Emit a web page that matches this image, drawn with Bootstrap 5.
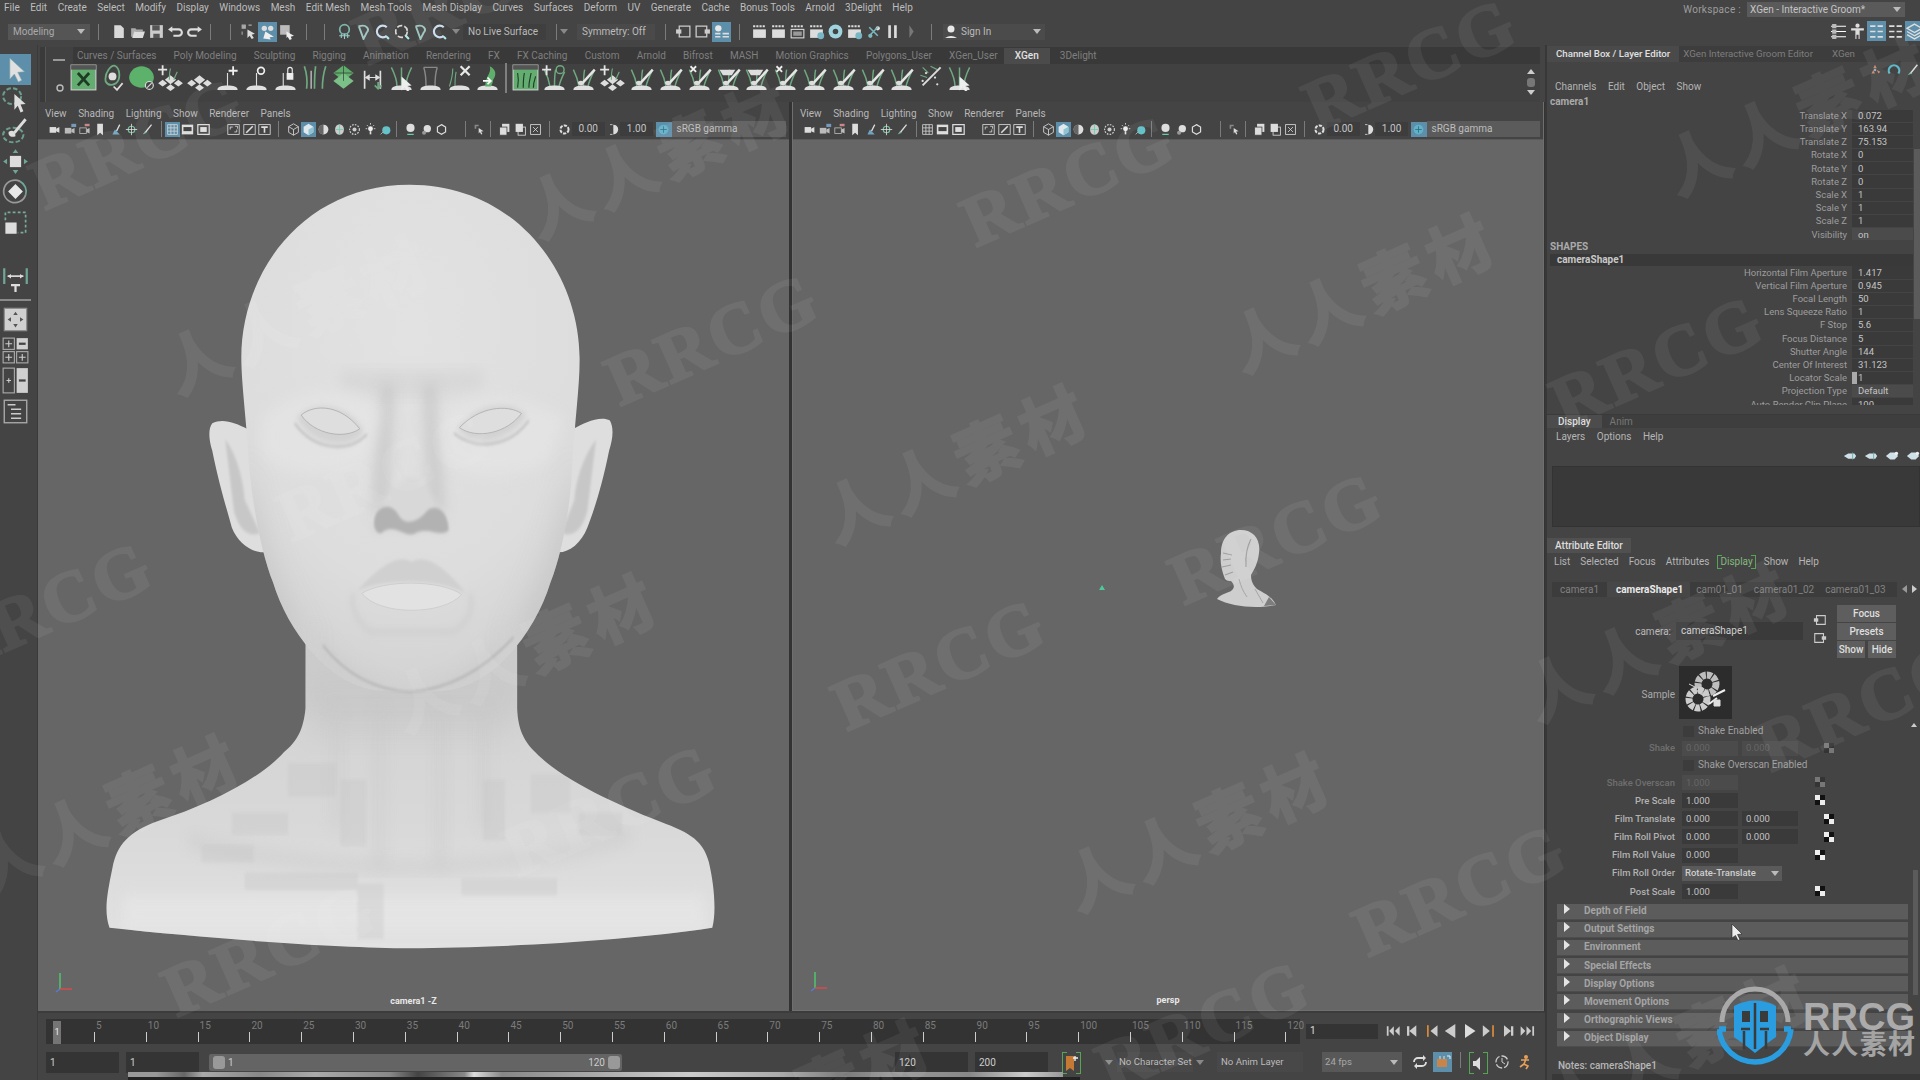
<!DOCTYPE html>
<html lang="en"><head><meta charset="utf-8"><title>Maya</title>
<link href="https://cdn.jsdelivr.net/npm/bootstrap@5.3.0/dist/css/bootstrap.min.css" rel="stylesheet">
<style>
html,body{margin:0;width:1920px;height:1080px;overflow:hidden;background:#444}
body{font-family:Roboto,"Liberation Sans",sans-serif;font-size:10px;line-height:1;color:#bdbdbd}
.app{position:relative;width:1920px;height:1080px;overflow:hidden;background:#444}
.wmk{position:absolute;left:0;top:0;width:1920px;height:1080px;pointer-events:none;z-index:5}
.wmk text{fill:#fff;stroke:#fff;stroke-width:2.2px;opacity:.06;text-anchor:middle;font-weight:700}
.wm-r{font-family:"Liberation Serif",serif;font-size:72px;letter-spacing:3px}
.wm-c{font-family:"Noto Sans CJK SC",sans-serif;font-size:64px;letter-spacing:8px}
.brandmark{position:absolute;left:1717px;top:985px;width:203px;height:80px;z-index:6}
.brandmark text{font-weight:700}
.top-left{width:1545px}.top-right{width:375px}
.menubar{height:15px;align-items:center}
.menubar .mg{margin-left:10.5px}
.mi-1{padding-left:4px}
.status{height:30px;align-items:center;padding:3px 0 0 8px}
.sel{height:16px;display:flex;align-items:center;background:#555;color:#aaa;padding:0 5px}
.sel-mode{width:82px;justify-content:space-between}
.tri{width:0;height:0;border-left:4px solid transparent;border-right:4px solid transparent;border-top:5px solid #bbb;flex:none}
.tri-dim{border-top-color:#888;margin:0 3px}
.ic{display:flex;align-items:center;justify-content:center;flex:none}
.ic19{width:19px;height:20px}.ic19 svg{width:17px;height:17px}
.ic15{width:15.4px;height:15px}.ic15 svg{width:13px;height:13px}
.on{background:#5d8eaa}
.sep{width:1px;height:16px;background:#7b7b7b;flex:none}
.sp3{width:3px;flex:none}.sp6{width:6px;flex:none}.sp8{width:8px;flex:none}.sp10{width:10px;flex:none}.sp17{width:17px;flex:none}.sp19{width:19px;flex:none}
.box-d{height:16px;display:flex;align-items:center;background:#3f3f3f;color:#bbb;padding:0 5px}
.bx-live{width:83px}.bx-sym{width:78px;margin-left:6px;background:#4a4a4a}
.bx-sign{width:102px;justify-content:space-between;background:#4b4b4b;padding:0 4px 0 18px;margin-left:11px}
.ws-row{height:15px;align-items:center;justify-content:flex-end;margin-top:2px}
.ws-lab{color:#9d9d9d;margin-right:6px;letter-spacing:.3px}
.ws-sel{width:158px;height:15px;background:#5a5a5a;color:#c4c4c4;display:flex;align-items:center;justify-content:space-between;padding:0 4px 0 3px;margin-right:15px}
.ws-ic{height:28px;justify-content:flex-end;align-items:center;margin-right:-4px}
.main{height:1035px}
.toolbox{width:38px;flex:none;padding-top:9px;border-right:1px solid #3a3a3a;align-items:flex-start}
.tool{width:31px;height:30.6px;display:flex;align-items:center;justify-content:center;flex:none}
.tool svg{width:27px;height:27px}
.tool-gap{height:27px;flex:none}
.tool-sep{width:31px;height:2px;background:#8a8a8a;margin:4px 0 3px;flex:none}
.center{width:1507px;flex:none}
.shelf{height:55px;flex:none;margin:2px 5px 0 2px;display:flex;background:#414141}
.shelf-grip{width:6px;background:#3a3a3a;border-right:1px solid #555}
.shelf-side{width:27px;display:flex;flex-direction:column;align-items:center;justify-content:space-between;padding:10px 0 9px}
.shelf-body{flex:1;min-width:0;position:relative}
.shelf-tabs{height:17px;background:#393939;display:flex;align-items:center;color:#7f7f7f;white-space:nowrap;padding:1px 0 0 4px}
.shelf-tabs span{flex:none;margin-right:17.2px}
.shelf-tabs .tab-act{background:#4b4b4b;color:#e2e2e2;height:16px;display:flex;align-items:center;padding:0 11px;font-weight:500;margin:0 10px 0 -11px}
.shelf-icons{height:27px;display:flex;align-items:center;margin-left:-4px}
.sic{width:28.9px;height:30px;display:flex;align-items:center;justify-content:center;flex:none}
.sic svg{width:27px;height:27px}
.shelf-div{width:2px;height:30px;background:#7f7f7f;margin:0 4px 0 3px;flex:none}
.shelf-scroll{position:absolute;right:5px;top:21px;height:28px;width:8px;display:flex;flex-direction:column;align-items:center;justify-content:space-between}
.views{height:909px;flex:none;display:flex;gap:3px;background:#333}
.vp{display:flex;flex-direction:column;background:#444;flex:none;position:relative}
.vp-l{width:751px}.vp-r{width:752px;border:1px solid #6f6f6f;border-width:0 1px 1px 1px}
.vp-menu{height:18px;display:flex;align-items:flex-end;gap:11.5px;padding:0 0 1px 7px;color:#b8b8b8;flex:none}
.vp-bar{height:19px;display:flex;align-items:center;padding:0 3px 1px 9px;flex:none;white-space:nowrap}
.num{width:33px;height:14px;background:#3d3d3d;color:#c5c5c5;display:flex;align-items:center;justify-content:center;flex:none}
.gamma{flex:1;min-width:0;height:16px;background:#5b5b5b;color:#bdbdbd;display:flex;align-items:center;padding-left:5px}
.canvas{flex:1;background:#666;position:relative;overflow:hidden;border-top:1px solid #5a5a5a}
.vp-cap{position:absolute;left:0;right:0;bottom:5px;text-align:center;color:#e8e8e8;font-size:9px;font-weight:700}
.head{position:absolute;left:42px;top:20px;width:680px;height:860px}
.head2{position:absolute;left:424px;top:389px;width:62px;height:78px}
.gizmo{position:absolute;width:26px;height:26px;bottom:16px;left:10px}
.tiny-tri{position:absolute;left:306px;top:445px;width:0;height:0;border-left:3px solid transparent;border-right:3px solid transparent;border-bottom:5px solid #4fc79a}
.tl{height:33px;flex:none;display:flex;align-items:center;padding:5px 0 0 8px;background:#444;border-top:2px solid #3c3c3c}
.tl-track{width:1254px;height:25px;background:#333;display:flex;position:relative;flex:none;align-items:flex-end}
.tl-cur{width:8px;height:23px;background:#757575;margin:0 33px 0 7px;flex:none;color:#eee;display:flex;align-items:center;justify-content:center;font-size:9px}
.tick{width:51.8px;flex:none;height:25px;position:relative;color:#7b7b7b;font-size:10px}
.tick i{position:absolute;left:0;bottom:2px;width:1px;height:10px;background:#ccc}
.tick b{position:absolute;left:2px;top:2px;font-weight:400}
.tl-input{width:72px;height:15px;background:#343434;color:#ddd;margin-left:6px;display:flex;align-items:center;padding-left:4px;flex:none}
.pb{display:flex;align-items:center;margin-left:5px}
.pb svg{width:19.3px;height:14px;flex:none}
.rg{height:38px;flex:none;position:relative;display:flex;padding:8px 0 0 8px;background:#444}
.rg-in{width:73px;height:21px;background:#343434;color:#ccc;display:flex;align-items:center;padding-left:4px;flex:none}
.rg-gap{margin-left:7px}
.rg-sl{width:413px;height:17px;background:#646464;margin:2px 0 0 10px;display:flex;align-items:center;justify-content:space-between;padding:0 2px 0 4px;flex:none;border-radius:2px;color:#ccc}
.rg-h{width:12px;height:13px;background:#999;border-radius:3px;display:inline-block;flex:none}
.rg-mid{flex:1;padding:0 3px;display:flex;justify-content:space-between}
.wave{position:absolute;left:90px;top:28px;width:935px;height:5px;background:linear-gradient(90deg,#999 0 3%,#666 6%,#aaa 8%,#888 14%,#aaa 20%,#888 28%,#444 31%,#888 36%,#ddd 37%,#888 40%,#aaa 50%,#ccc 60%,#aaa 70%,#777 76%,#999 82%,#888 90%,#ccc 96%,#999 100%);z-index:1}
.wave-bg{position:absolute;left:90px;top:33px;width:952px;height:5px;background:#222}
.rg-right{margin-left:273px;display:flex;align-items:flex-start}
.brk{border:solid #57a454;border-width:0 1.5px;background:linear-gradient(#57a454,#57a454) 0 0/4px 1px no-repeat,linear-gradient(#57a454,#57a454) 100% 0/4px 1px no-repeat,linear-gradient(#57a454,#57a454) 0 100%/4px 1px no-repeat,linear-gradient(#57a454,#57a454) 100% 100%/4px 1px no-repeat}
.key{width:19px;height:22px;margin:0 0 0 14px;display:flex;align-items:center;justify-content:center;flex:none}
.key svg{width:13px;height:17px}
.rg-t{height:20px;display:flex;align-items:center;color:#bbb;flex:none;font-size:9.6px}
.t-chr{width:76px;background:#484848;padding-left:2px;margin-left:1px}
.t-lay{width:86px;background:#484848;padding-left:4px;margin-left:10px}
.t-fps{width:80px;background:#585858;padding:0 4px 0 3px;justify-content:space-between;color:#a8a8a8;margin-left:19px}
.rg-ic{width:19px;height:20px;display:flex;align-items:center;justify-content:center;flex:none}
.rg-ic svg{width:16px;height:16px}
.right{width:375px;flex:none;background:#444;border-left:2px solid #383838;position:relative}
.rtabs{height:16px;display:flex;align-items:center;color:#7d7d7d;background:#3d3d3d;margin-top:1px;flex:none;font-size:9.7px}
.rtab-a{background:#4a4a4a;color:#e0e0e0;font-weight:500;height:16px;display:flex;align-items:center;padding:0 9px;flex:none;margin-right:4px}
.rt-g{margin-left:19px}
.r-ic{height:16px;display:flex;justify-content:flex-end;align-items:center;gap:5px;flex:none}
.r-ic svg{width:14px;height:14px}
.rmenu{display:flex;align-items:center;flex:none;color:#b5b5b5;gap:11.500px;padding-left:8px}
.rmenu-cb{height:17px}
.cb{height:310px;flex:none;overflow:hidden;padding-left:3px;position:relative}
.cb-h{height:14px;display:flex;align-items:center;font-weight:700;color:#aaa;font-size:10px}
.cb-h2{height:13px}
.cb-s{height:12px;display:flex;align-items:center;background:#393939;font-weight:700;color:#c9c9c9;padding-left:7px;width:363px}
.cb-r{height:13.2px;display:flex;align-items:center;font-size:9.5px;color:#9d9d9d}
.cb-l{width:297px;text-align:right;flex:none}
.cb-v{width:61px;height:12.2px;margin-left:5px;background:#3a3a3a;color:#c4c4c4;padding-left:6px;display:flex;align-items:center;flex:none;position:relative}
.cb-v.ro{background:#4b4b4b}
.lcs{position:absolute;left:0;top:0;width:5px;height:100%;background:#aaa}
.cb-sb{position:absolute;right:0;top:54px;width:6px;height:170px;background:#5b5b5b}
.disp{height:10px;flex:none;background:#444;border-bottom:1px solid #3a3a3a}
.tabs2{height:13px;display:flex;align-items:center;background:#3e3e3e;color:#777;flex:none}
.t2a{background:#4c4c4c;color:#ddd;font-weight:500;height:13px;padding:0 11px;display:flex;align-items:center;flex:none}
.rmenu-l{height:18px;padding-left:9px}
.l-ic{height:20px;display:flex;justify-content:flex-end;gap:7px;align-items:center;flex:none}
.l-ic svg{width:14px;height:12px}
.lbox{height:61px;background:#393939;margin-left:5px;flex:none;border:1px solid #333}
.ae-tab{margin-top:11px;height:15px;flex:none;display:flex}
.ae-tab span{background:#505050;color:#ddd;padding:0 8px;display:flex;align-items:center;font-weight:500}
.rmenu-a{height:17px;gap:10px;padding-left:7px}
.dsp{padding:2px 2px;margin:0 -2px;color:#83b97c}
.aet{margin-top:12px;height:15px;display:flex;align-items:center;color:#818181;background:#3c3c3c;margin-left:5px;width:345px;position:relative;flex:none}
.aet-a{background:#474747;color:#e9e9e9;font-weight:700;height:15px;display:flex;align-items:center;padding:0 7px 0 9px;flex:none;margin-right:6px}
.aet span{flex:none}
.aet-g{margin-right:11px}
.aet-0{padding:0 8px}
.aet-arr{position:absolute;left:350px;top:3px;display:flex;gap:5px}
.tl-l{border-top:4px solid transparent;border-bottom:4px solid transparent;border-right:5px solid #999;display:block;width:0;height:0}
.tl-rr{border-top:4px solid transparent;border-bottom:4px solid transparent;border-left:5px solid #ccc;display:block;width:0;height:0}
.cam-b{display:flex;margin-top:8px;height:54px;flex:none}
.cam-lab{width:129px;text-align:right;padding-right:5px;flex:none;color:#b8b8b8;padding-top:22px}
.cam-in{width:127px;height:18px;background:#3a3a3a;color:#cfcfcf;padding-left:5px;display:flex;align-items:center;margin-top:17px;flex:none}
.cam-ics{width:34px;display:flex;flex-direction:column;align-items:center;padding-top:8px;gap:4px;flex:none}
.cam-ics svg{width:16px;height:14px}
.cam-btn{width:59px;flex:none;display:flex;flex-direction:column;gap:1px}
.mbtn{height:17px;background:#5e5e5e;color:#dedede;display:flex;align-items:center;justify-content:center;font-weight:500;flex:none}
.mbtn-row{display:flex;gap:3px}
.mbtn-row .mbtn{flex:1 1 0;min-width:0}
.sam{display:flex;margin-top:7px;height:54px;flex:none}
.sam-l{width:132px;text-align:right;padding:24px 4px 0 0;color:#aaa;flex:none}
.sam-sw{width:53px;height:53px;background:#2c2c2c;flex:none;display:flex;align-items:center;justify-content:center}
.frm{flex:1;min-height:0;position:relative;padding:3px 0 0 10px}
.fr-c{height:16px;display:flex;align-items:center;padding-left:126px;color:#9f9f9f}
.chk{width:11px;height:11px;background:#3c3c3c;margin-right:4px;flex:none}
.fr{height:18.2px;display:flex;align-items:center;color:#b2b2b2;flex:none;font-weight:500;font-size:9.5px}
.fr-d{color:#6f6f6f}
.fr-l{width:118px;text-align:right;flex:none}
.fr-i{width:56px;height:15px;background:#3a3a3a;color:#c2c2c2;margin-left:7px;display:flex;align-items:center;padding-left:4px;font-weight:400;flex:none}
.fr-i+.fr-i{margin-left:4px}
.fr-i.dis{background:#4b4b4b;color:#666}
.ck1{margin-left:77px;width:10px;height:10px;flex:none}
.ck2{margin-left:26px;width:10px;height:10px;flex:none}
.fr-sel{width:100px;height:15px;background:#5a5a5a;color:#cfcfcf;display:flex;align-items:center;justify-content:space-between;padding:0 3px;font-size:9.5px;margin-left:7px}
.sect{height:16px;width:351px;background:#5c5c5c;display:flex;align-items:center;margin:0 0 2.2px 0;font-weight:700;color:#a4a4a4;flex:none;border-bottom:1px solid #4d4d4d}
.sect i{border-top:5px solid transparent;border-bottom:5px solid transparent;border-left:6px solid #e4e4e4;margin:0 14px 4px 7px;display:block;width:0;height:0}
.sects{margin-top:3px}
.ae-sb{position:absolute;right:2px;top:150px;width:5px;height:125px;background:#5b5b5b}
.ae-arr{position:absolute;right:3px;top:3px;border-left:3px solid transparent;border-right:3px solid transparent;border-bottom:4px solid #ccc}
.mouse{position:absolute;left:1731px;top:923px;width:12px;height:18px;z-index:6}
.notes{height:16px;flex:none;padding-left:11px;display:flex;align-items:center;color:#b5b5b5;font-weight:500}
.notes-b{height:6px;background:#383838;margin-left:5px;flex:none}
</style></head>
<body>
<svg width="0" height="0" class="position-absolute">
<defs>
<symbol id="doc" viewBox="0 0 16 16"><path d="M4 2h6l3 3v9H4z" fill="#d8d8d8"/></symbol>
<symbol id="fold" viewBox="0 0 16 16"><path d="M2 5h4l1 1h6v2H6l-2 5H2z" fill="#aaa"/><path d="M5 8h10l-2 6H3z" fill="#ddd"/></symbol>
<symbol id="save" viewBox="0 0 16 16"><path d="M2 2h12v12H2z" fill="#ccc"/><path d="M4 2h7v5H4zM5 10h6v4H5z" fill="#555"/></symbol>
<symbol id="undo" viewBox="0 0 16 16"><path d="M3 8h8a3 3 0 0 1 0 6H6" fill="none" stroke="#ddd" stroke-width="2" transform="translate(0 -2)"/><path d="M1 6l4-3v6z" fill="#ddd"/></symbol>
<symbol id="redo" viewBox="0 0 16 16"><path d="M13 8H5a3 3 0 0 0 0 6h5" fill="none" stroke="#ddd" stroke-width="2" transform="translate(0 -2)"/><path d="M15 6l-4-3v6z" fill="#ddd"/></symbol>
<symbol id="s1" viewBox="0 0 16 16"><path d="M2 2h3v3H2zM8 2h3M2 8v3" fill="#aaa" stroke="#aaa"/><path d="M7 6l7 4-3 1 2 3-2 1-2-3-2 2z" fill="#ddd"/></symbol>
<symbol id="s2" viewBox="0 0 16 16"><circle cx="5" cy="5" r="2.5" fill="#ddd"/><circle cx="11" cy="5" r="2.5" fill="#ddd"/><path d="M6 8l8 5-4 .5 1 2-7-1z" fill="#eee"/></symbol>
<symbol id="s3" viewBox="0 0 16 16"><path d="M2 2h9v9H2z" fill="#bbb"/><path d="M8 8l7 4-3 1 1 2-2 1-2-3-1 1z" fill="#eee"/></symbol>
<symbol id="sn1" viewBox="0 0 16 16"><circle cx="8" cy="6" r="4.5" fill="none" stroke="#7fb7ad" stroke-width="1.6"/><path d="M3 12h10M8 10v5M5 10v4M11 10v4" stroke="#9cc" stroke-width="1"/></symbol>
<symbol id="sn2" viewBox="0 0 16 16"><path d="M4 3c7-2 10 3 7 6l-3 6-4-11z" fill="none" stroke="#9cc4bf" stroke-width="1.8"/></symbol>
<symbol id="sn3" viewBox="0 0 16 16"><path d="M12 4A5.5 5.5 0 1 0 12 12" fill="none" stroke="#cde" stroke-width="2"/><path d="M12 13l2 2" stroke="#aee" stroke-width="2"/></symbol>
<symbol id="sn4" viewBox="0 0 16 16"><circle cx="8" cy="8" r="5.5" fill="none" stroke="#d8d8d8" stroke-width="1.6" stroke-dasharray="5 2"/><path d="M12 12l3 3" stroke="#aee" stroke-width="2"/></symbol>
<symbol id="rbox" viewBox="0 0 16 16"><path d="M4 3h10v10H4z" fill="none" stroke="#ccc" stroke-width="1.2"/><path d="M1 6h5v4H1z" fill="#ccc"/></symbol>
<symbol id="rbox2" viewBox="0 0 16 16"><path d="M2 3h10v10H2z" fill="none" stroke="#ccc" stroke-width="1.2"/><path d="M10 6h5v4h-5z" fill="#ccc"/></symbol>
<symbol id="lst" viewBox="0 0 16 16"><circle cx="5" cy="5" r="3" fill="#e8e8e8"/><path d="M9 10h6M9 13h6M2 10h5M2 13h5" stroke="#ddd" stroke-width="1.5"/></symbol>
<symbol id="clap" viewBox="0 0 16 16"><path d="M2 2h2v2H2zm3 0h2v2H5zm3 0h2v2H8zm3 0h2v2h-2z" fill="#ddd"/><rect x="2" y="6" width="12" height="8" fill="#ddd"/></symbol>
<symbol id="clap2" viewBox="0 0 16 16"><path d="M2 2h2v2H2zm3 0h2v2H5zm3 0h2v2H8zm3 0h2v2h-2z" fill="#ddd"/><rect x="2" y="6" width="12" height="8" fill="none" stroke="#ddd"/><rect x="4" y="8" width="8" height="4" fill="#999"/></symbol>
<symbol id="clap3" viewBox="0 0 16 16"><use href="#clap"/><circle cx="12" cy="12" r="3.2" fill="#78b6c4"/></symbol>
<symbol id="ring" viewBox="0 0 16 16"><circle cx="8" cy="8" r="6.5" fill="#9fd4de"/><circle cx="8" cy="8" r="2.6" fill="#444"/></symbol>
<symbol id="bolt" viewBox="0 0 16 16"><circle cx="5" cy="12" r="2" fill="#7cbac0"/><circle cx="12" cy="5" r="2" fill="#ddd"/><path d="M5 11l7-7M4 4l8 8" stroke="#7cbac0" stroke-width="1.4"/></symbol>
<symbol id="paus" viewBox="0 0 16 16"><path d="M4 2h2.5v12H4zM9.500 2H12v12H9.500z" fill="#ddd"/></symbol>
<symbol id="rtri" viewBox="0 0 16 16"><path d="M6 2l4 6-4 6" fill="#777"/></symbol>
<symbol id="pers" viewBox="0 0 16 16"><circle cx="8" cy="5" r="3.5" fill="#e8e8e8"/><path d="M2 14q6-4 12 0z" fill="#e8e8e8"/></symbol>
<symbol id="cur" viewBox="0 0 24 24"><path d="M7 2l13 12-6 .5 3.500 7-3 1.500-3.500-7-4 4.500z" fill="#e0e0e0" stroke="#8aa" stroke-width=".5"/></symbol>
<symbol id="lasso" viewBox="0 0 24 24"><ellipse cx="9" cy="9" rx="8" ry="7" fill="none" stroke="#6c9e90" stroke-width="1.8" stroke-dasharray="4 2"/><path d="M11 7l10 9-4.500.5 2.500 6-2.500 1-2.500-6-3 3.500z" fill="#ddd"/></symbol>
<symbol id="paint" viewBox="0 0 24 24"><ellipse cx="10" cy="16" rx="9" ry="6.500" fill="none" stroke="#6c9e90" stroke-width="1.800" stroke-dasharray="4 2"/><path d="M21 2L11 14" stroke="#ddd" stroke-width="2.500"/><path d="M6 13c4-2 6 0 6 4-4 2-7-1-6-4z" fill="#ddd"/></symbol>
<symbol id="mov" viewBox="0 0 24 24"><rect x="7" y="7" width="10" height="10" fill="#ddd"/><path d="M12 1l2.500 3.500h-5zM12 23l-2.500-3.500h5zM1 12l3.500-2.500v5zM23 12l-3.500 2.500v-5z" fill="#6fa698"/></symbol>
<symbol id="rot" viewBox="0 0 24 24"><path d="M12 6.500l5.500 5.500-5.500 5.500L6.500 12z" fill="#e8e8e8" stroke="#e8e8e8" stroke-width="1.500"/><path d="M21 15a10 10 0 1 1-5-12" fill="none" stroke="#999" stroke-width="1.500"/><path d="M16 3a10 10 0 0 1 5 12" fill="none" stroke="#6fa698" stroke-width="1.500"/></symbol>
<symbol id="sca" viewBox="0 0 24 24"><rect x="3" y="12" width="10" height="10" fill="#ddd"/><path d="M3 10V3h18v18h-7" fill="none" stroke="#7aaa9c" stroke-width="1.500" stroke-dasharray="2.500 2"/></symbol>
<symbol id="last" viewBox="0 0 24 24"><path d="M2 2v14M22 2v14" stroke="#6fa698" stroke-width="2"/><path d="M5 9h14" stroke="#ddd" stroke-width="1.500"/><path d="M5 9l3-2v4zM19 9l-3-2v4z" fill="#ddd"/><path d="M8 16h8v2h-3v5h-2v-5H8z" fill="#ddd"/></symbol>
<symbol id="lay1" viewBox="0 0 24 24"><rect x="2" y="2" width="20" height="20" fill="#d0d0d0" stroke="#888"/><path d="M12 5l2 3h-4zM12 19l-2-3h4zM5 12l3-2v4zM19 12l-3 2v-4z" fill="#555"/></symbol>
<symbol id="lay4" viewBox="0 0 24 24"><rect x="1" y="1" width="10" height="10" fill="none" stroke="#aaa"/><rect x="13" y="1" width="10" height="10" fill="#d0d0d0"/><rect x="1" y="13" width="10" height="10" fill="none" stroke="#aaa"/><rect x="13" y="13" width="10" height="10" fill="none" stroke="#aaa"/><path d="M6 3v6M3 6h6M6 15v6M3 18h6M18 15v6M15 18h6" stroke="#ccc"/><path d="M15 6h6" stroke="#444" stroke-width="2"/></symbol>
<symbol id="lay2" viewBox="0 0 24 24"><rect x="1" y="1" width="10" height="22" fill="none" stroke="#aaa"/><rect x="13" y="1" width="10" height="22" fill="#d0d0d0"/><path d="M6 10v4M4 12h4" stroke="#ccc"/><path d="M15 12h6" stroke="#444" stroke-width="2"/></symbol>
<symbol id="lay0" viewBox="0 0 24 24"><rect x="2" y="2" width="20" height="20" fill="none" stroke="#aaa" stroke-width="1.200"/><path d="M5 6h7M8 10h9M8 14h9M8 18h9" stroke="#ccc" stroke-width="1.500"/></symbol>
<symbol id="bladeG" viewBox="0 0 24 24"><path d="M8 20C7 14 5 9 3 5M12 20c0-6 0-10 1-15M16 20c1-5 3-9 5-13" fill="none" stroke="#6fa980" stroke-width="1.300"/></symbol>
<symbol id="base" viewBox="0 0 24 24"><path d="M3 23c0-3 4-4 9-4s9 1 9 4z" fill="#e0e0e0"/></symbol>
<symbol id="brush" viewBox="0 0 24 24"><path d="M22 5L11 17" stroke="#e6e6e6" stroke-width="2.200"/><path d="M7 16c3-2 5-1 5 2-2 2-5 1-5-2z" fill="#ddd"/></symbol>
<symbol id="dia" viewBox="0 0 24 24"><path d="M12 10l5 4-5 4-5-4zM5 14l4 3-4 3-4-3zM19 14l4 3-4 3-4-3zM12 18l4 3-4 3-4-3z" fill="#ddd"/></symbol>
<symbol id="plus" viewBox="0 0 24 24"><path d="M5 1v9M1 5h8" stroke="#e4e4e4" stroke-width="1.600"/></symbol>
<symbol id="g1" viewBox="0 0 24 24"><use href="#bladeG"/><use href="#base"/><use href="#brush"/></symbol>
<symbol id="g2" viewBox="0 0 24 24"><use href="#plus"/><use href="#dia"/><path d="M11 14c0-4 0-7 1-10M15 14c1-3 2-5 3-7" stroke="#6fa980" fill="none"/></symbol>
<symbol id="g3" viewBox="0 0 24 24"><use href="#base"/><path d="M12 20V8" stroke="#ddd"/><path d="M17 2v8M13 6h8" stroke="#eee" stroke-width="1.600"/></symbol>
<symbol id="g4" viewBox="0 0 24 24"><use href="#base"/><path d="M12 20V8" stroke="#ddd"/><circle cx="16" cy="6" r="3" fill="none" stroke="#eee" stroke-width="1.500"/></symbol>
<symbol id="g5" viewBox="0 0 24 24"><use href="#base"/><path d="M10 20V8" stroke="#ddd"/><path d="M13 8h6v6h-6z" fill="#eee"/><path d="M14 8V5a2 2 0 0 1 4 0v3" fill="none" stroke="#eee"/></symbol>
<symbol id="g6" viewBox="0 0 24 24"><path d="M5 22C6 14 5 8 3 2M12 22c0-8 0-14 1-20M19 22c0-8 1-14 3-20" fill="none" stroke="#6fa980" stroke-width="1.500"/><path d="M9 22V6" stroke="#ddd"/></symbol>
<symbol id="g7" viewBox="0 0 24 24"><path d="M12 1l9 7-9 7-9-7z" fill="#5fae6c"/><path d="M12 8l9 7-9 7-9-7z" fill="#7bc087"/><path d="M4 8h16M12 1v14" stroke="#333" stroke-width=".6"/></symbol>
<symbol id="g8" viewBox="0 0 24 24"><path d="M5 22V6M19 22V6" stroke="#ddd" stroke-width="1.500"/><path d="M6 12h12M6 12l3-2v4zM18 12l-3-2v4z" fill="#ddd" stroke="#ddd"/><path d="M17 16v6M14 19l3 3 3-3" stroke="#6fa980" stroke-width="1.500" fill="none"/></symbol>
<symbol id="g9" viewBox="0 0 24 24"><path d="M3 3c3 6 5 12 5 17M21 3c-3 6-5 12-5 17M12 3v17" stroke="#6fa980" fill="none" stroke-width="1.300"/><use href="#base"/><path d="M12 11l9 8-4 .5 2 4-2 1-2-4-3 3z" fill="#eee"/></symbol>
<symbol id="g10" viewBox="0 0 24 24"><path d="M6 3c2 6 2 11 2 17M18 3c-2 6-2 11-2 17M6 3h12" stroke="#888" fill="none" stroke-width="1.300"/><use href="#base"/></symbol>
<symbol id="g11" viewBox="0 0 24 24"><path d="M3 20c2-6 3-10 3-16M8 20c0-6 0-9 1-13" stroke="#6fa980" fill="none"/><path d="M13 2l8 8M21 2l-8 8" stroke="#e8e8e8" stroke-width="2"/><use href="#base"/></symbol>
<symbol id="g12" viewBox="0 0 24 24"><use href="#base"/><path d="M14 2c6 3 6 8 3 12 0 2-1 4-2 6h-5c0-4 1-7 2-9 2-3 3-6 2-9z" fill="#5fae6c"/><path d="M8 15h7M12 12l3 3-3 3" stroke="#fff" fill="none" stroke-width="1.500"/></symbol>
<symbol id="gx" viewBox="0 0 24 24"><rect x="1" y="1" width="22" height="22" fill="#62ad6f" stroke="#ccc"/><rect x="1" y="1" width="22" height="4" fill="#555"/><path d="M7 8l10 11M17 8L7 19" stroke="#1f3b24" stroke-width="2.500"/></symbol>
<symbol id="gd" viewBox="0 0 24 24"><path d="M5 12C8 4 17 2 19 4c3 4-1 13-7 14C8 18 5 16 5 12z" fill="none" stroke="#6fa980" stroke-width="1.600" transform="rotate(-30 12 12)"/><circle cx="12" cy="11" r="3.500" fill="#ddd"/><path d="M13 20l3 3 5-6" stroke="#ddd" stroke-width="1.500" fill="none"/></symbol>
<symbol id="gb" viewBox="0 0 24 24"><path d="M12 2c6 0 11 5 11 10s-5 9-11 9S1 17 1 12 6 2 12 2z" fill="#5cb16b"/><circle cx="19" cy="19" r="3.500" fill="#444" stroke="#ddd"/><path d="M17 21l4-4" stroke="#ddd"/></symbol>
<symbol id="gm" viewBox="0 0 24 24"><rect x="1" y="1" width="22" height="22" fill="#62ad6f" stroke="#ccc"/><rect x="1" y="1" width="22" height="4" fill="#555"/><path d="M5 21c1-5 1-8 0-13M10 21c0-5 0-8 1-13M15 21c0-5 1-8 2-13M19 21c0-4 1-7 2-10" stroke="#1f3b24" fill="none"/></symbol>
<symbol id="gj" viewBox="0 0 24 24"><use href="#bladeG"/><use href="#plus"/><use href="#base"/><circle cx="17" cy="5" r="3.500" fill="none" stroke="#6fa980" stroke-width="1.300"/></symbol>
<symbol id="gh" viewBox="0 0 24 24"><use href="#g1"/><path d="M4 5h14l-3 5H7z" fill="#ddd"/></symbol>
<symbol id="gy" viewBox="0 0 24 24"><use href="#g1"/><path d="M4 2l5 5M9 2L4 7" stroke="#eee" stroke-width="1.600"/></symbol>
<symbol id="gs" viewBox="0 0 24 24"><path d="M5 3l5 5M12 2l6 3M3 10l6 2" stroke="#6fa980"/><path d="M21 3L5 19" stroke="#ddd" stroke-width="1.800"/><circle cx="16" cy="12" r="1" fill="#ddd"/><circle cx="8" cy="8" r="1" fill="#ddd"/><circle cx="18" cy="18" r="1" fill="#ddd"/><circle cx="5" cy="15" r="1" fill="#ddd"/></symbol>
<symbol id="cam" viewBox="0 0 16 16"><rect x="2" y="5" width="8" height="7" fill="#ddd"/><path d="M10 7l4-2v7l-4-2z" fill="#ddd"/></symbol>
<symbol id="cam2" viewBox="0 0 16 16"><rect x="1" y="6" width="8" height="7" fill="#bbb"/><path d="M9 8l4-2v7l-4-2z" fill="#bbb"/><path d="M9 1h6v4H9z" fill="#79b"/></symbol>
<symbol id="cam3" viewBox="0 0 16 16"><rect x="1" y="6" width="8" height="7" fill="none" stroke="#bbb"/><path d="M9 8l4-2v7l-4-2z" fill="#bbb"/><path d="M7 1h6v3H7z" fill="#c88"/></symbol>
<symbol id="bkm" viewBox="0 0 16 16"><path d="M4 1h7v14l-3.500-3-3.500 3z" fill="#ddd"/></symbol>
<symbol id="imgp" viewBox="0 0 16 16"><path d="M12 2l-4 8" stroke="#ddd" stroke-width="1.500"/><path d="M3 14l3-6 6 6z" fill="#6fa5c0"/></symbol>
<symbol id="gmag" viewBox="0 0 16 16"><circle cx="8" cy="8" r="4" fill="none" stroke="#7ac0a0" stroke-width="1.500"/><path d="M8 1v14M1 8h14" stroke="#ddd"/></symbol>
<symbol id="pen" viewBox="0 0 16 16"><path d="M13 2L5 12" stroke="#ddd" stroke-width="1.600"/><path d="M2 14l3-4 2 2z" fill="#7ac0a0"/></symbol>
<symbol id="grid" viewBox="0 0 16 16"><path d="M2 2h12v12H2zM2 6h12M2 10h12M6 2v12M10 2v12" fill="none" stroke="#d5d5d5"/></symbol>
<symbol id="film" viewBox="0 0 16 16"><rect x="1" y="2" width="14" height="12" fill="#ddd"/><rect x="3" y="5" width="10" height="5" fill="#444"/></symbol>
<symbol id="fil2" viewBox="0 0 16 16"><rect x="1" y="2" width="14" height="12" fill="none" stroke="#ddd" stroke-width="1.500"/><rect x="4" y="5" width="8" height="6" fill="#ddd"/></symbol>
<symbol id="fil3" viewBox="0 0 16 16"><rect x="1" y="2" width="14" height="12" fill="none" stroke="#ddd"/><path d="M4 5h3M4 5v3M12 11H9M12 11V8" stroke="#ddd"/><path d="M10 4l3 0v3" stroke="#ddd" fill="none"/></symbol>
<symbol id="fil4" viewBox="0 0 16 16"><rect x="1" y="2" width="14" height="12" fill="none" stroke="#ddd"/><path d="M4 12L12 4" stroke="#ddd" stroke-width="2"/></symbol>
<symbol id="fil5" viewBox="0 0 16 16"><rect x="1" y="2" width="14" height="12" fill="none" stroke="#ddd"/><path d="M4 5h8M8 5v7" stroke="#ddd" stroke-width="2"/></symbol>
<symbol id="cwi" viewBox="0 0 16 16"><path d="M8 1l6 3.500v7L8 15l-6-3.500v-7zM2 4.500L8 8l6-3.500M8 8v7" fill="none" stroke="#ddd"/></symbol>
<symbol id="csh" viewBox="0 0 16 16"><path d="M8 1l6 3.500v7L8 15l-6-3.500v-7z" fill="#dfe9ed"/><path d="M8 8l6-3.500v7L8 15z" fill="#8fc3d2"/></symbol>
<symbol id="half" viewBox="0 0 16 16"><circle cx="8" cy="8" r="6" fill="#ddd"/><path d="M8 2a6 6 0 0 0 0 12z" fill="#666"/></symbol>
<symbol id="cylt" viewBox="0 0 16 16"><ellipse cx="8" cy="8" rx="5.500" ry="6.500" fill="#ccc"/><path d="M3 8h10M8 2v12" stroke="#6ca" stroke-width="1"/></symbol>
<symbol id="dots" viewBox="0 0 16 16"><circle cx="8" cy="8" r="6" fill="none" stroke="#ccc" stroke-width="1.500" stroke-dasharray="2 1.500"/><circle cx="8" cy="8" r="2.500" fill="#ccc"/></symbol>
<symbol id="bulb" viewBox="0 0 16 16"><circle cx="8" cy="7" r="3" fill="#eee"/><path d="M7 10h2v4H7z" fill="#ddd"/><path d="M8 0v2M2 7h2M12 7h2M3.500 2.500l1.500 1.500M12.500 2.500L11 4" stroke="#ddd"/></symbol>
<symbol id="gel" viewBox="0 0 16 16"><circle cx="9" cy="9" r="5" fill="#64c2c8"/><path d="M2 14l4-4" stroke="#aaa" stroke-width="1.200"/></symbol>
<symbol id="sph" viewBox="0 0 16 16"><circle cx="8" cy="6" r="5" fill="#ddd"/><path d="M4 14h8" stroke="#6ca" stroke-width="1.500"/></symbol>
<symbol id="sp2" viewBox="0 0 16 16"><circle cx="9" cy="7" r="4.500" fill="#ddd"/><circle cx="5" cy="12" r="2.500" fill="#999"/></symbol>
<symbol id="hex" viewBox="0 0 16 16"><path d="M8 2l5 3v6l-5 3-5-3V5z" fill="none" stroke="#ddd" stroke-width="1.500"/></symbol>
<symbol id="cursm" viewBox="0 0 16 16"><path d="M2 2h5v2H4v3H2z" fill="#888"/><path d="M7 6l6 4-3 .5 1.500 3-1.500.5-1.500-3L7 13z" fill="#ddd"/></symbol>
<symbol id="dup1" viewBox="0 0 16 16"><rect x="5" y="1" width="9" height="10" fill="#ddd"/><rect x="2" y="5" width="9" height="10" fill="#ddd" stroke="#444"/></symbol>
<symbol id="dup2" viewBox="0 0 16 16"><rect x="2" y="1" width="9" height="10" fill="#ddd"/><rect x="5" y="5" width="9" height="10" fill="none" stroke="#ddd"/></symbol>
<symbol id="xr" viewBox="0 0 16 16"><rect x="2" y="2" width="12" height="12" fill="none" stroke="#ddd"/><path d="M5 5l6 6M5 11l6-6" stroke="#ddd"/></symbol>
<symbol id="ap" viewBox="0 0 16 16"><circle cx="8" cy="8" r="5" fill="none" stroke="#ddd" stroke-width="2.500" stroke-dasharray="4 1.500"/></symbol>
<symbol id="half2" viewBox="0 0 16 16"><path d="M9 2a6 6 0 0 1 0 12z" fill="#ddd"/><path d="M8 2H5M8 14H5" stroke="#ddd"/></symbol>
<symbol id="cm" viewBox="0 0 16 16"><circle cx="8" cy="8" r="6" fill="#61b1c8"/><path d="M4 8h8M8 4v8" stroke="#2f6b7c"/></symbol>
<symbol id="ckr" viewBox="0 0 10 10"><rect width="10" height="10" fill="#eee"/><path d="M5 0h5v5H5zM0 5h5v5H0z" fill="#111"/></symbol>
<symbol id="att" viewBox="0 0 16 16"><path d="M8 2l2 4-4 0zM4 12l2-4 2 4zM12 12l-2-4 4 2z" fill="#c86"/><circle cx="8" cy="8" r="1.500" fill="#8ac"/></symbol>
<symbol id="chn" viewBox="0 0 16 16"><path d="M2 3h5M2 8h5M2 13h5M9 3h5M9 8h5M9 13h5" stroke="#ddd" stroke-width="1.600"/></symbol>
<symbol id="arc" viewBox="0 0 16 16"><path d="M3 12a6 6 0 1 1 10 0" fill="none" stroke="#5fb8c9" stroke-width="2.500"/></symbol>
<symbol id="man" viewBox="0 0 16 16"><circle cx="8" cy="2.500" r="2" fill="#ddd"/><path d="M2 5h12v2h-4v8H9v-4H7v4H6V7H2z" fill="#ddd"/></symbol>
<symbol id="bx3" viewBox="0 0 16 16"><path d="M1 3h14M1 8h14M1 13h14" stroke="#fff" stroke-width="1"/><path d="M2 1h4v4H2zM2 6h4v4H2zM2 11h4v4H2z" fill="#bbb"/></symbol>
<symbol id="lyr" viewBox="0 0 16 16"><path d="M8 1l7 4-7 4-7-4zM1 8l7 4 7-4M1 11l7 4 7-4" fill="none" stroke="#ddd" stroke-width="1.300"/></symbol>
<symbol id="lay-i" viewBox="0 0 16 12"><path d="M1 6l5-3v6zM6 3h7l2 3-2 3H6z" fill="#cfe0e6"/><path d="M11 2v8" stroke="#6aa"/></symbol>
<symbol id="lay-j" viewBox="0 0 16 12"><path d="M1 6l5-4h5l4 4-4 4H6z" fill="#cfe0e6"/><circle cx="13" cy="3" r="2" fill="#eee"/></symbol>
</defs>
</svg>
<div class="app">
<div class="d-flex">
<div class="top-left d-flex flex-column">
<div class="menubar d-flex mi-1 text-nowrap"><span>File</span><span class="mg">Edit</span><span class="mg">Create</span><span class="mg">Select</span><span class="mg">Modify</span><span class="mg">Display</span><span class="mg">Windows</span><span class="mg">Mesh</span><span class="mg">Edit Mesh</span><span class="mg">Mesh Tools</span><span class="mg">Mesh Display</span><span class="mg">Curves</span><span class="mg">Surfaces</span><span class="mg">Deform</span><span class="mg">UV</span><span class="mg">Generate</span><span class="mg">Cache</span><span class="mg">Bonus Tools</span><span class="mg">Arnold</span><span class="mg">3Delight</span><span class="mg">Help</span></div>
<div class="status d-flex text-nowrap">
<div class="sel sel-mode"><span>Modeling</span><i class="tri"></i></div><div class="sp8"></div><div class="sep"></div><div class="sp10"></div>
<div class="ic ic19"><svg><use href="#doc"/></svg></div><div class="ic ic19"><svg><use href="#fold"/></svg></div><div class="ic ic19"><svg><use href="#save"/></svg></div><div class="ic ic19"><svg><use href="#undo"/></svg></div><div class="ic ic19"><svg><use href="#redo"/></svg></div><div class="sp6"></div><div class="sep"></div><div class="sp19"></div><div class="sep"></div><div class="sp8"></div>
<div class="ic ic19"><svg><use href="#s1"/></svg></div><div class="ic ic19 on"><svg><use href="#s2"/></svg></div><div class="ic ic19"><svg><use href="#s3"/></svg></div><div class="sp10"></div><div class="sep"></div><div class="sp17"></div><div class="sep"></div><div class="sp10"></div>
<div class="ic ic19"><svg><use href="#sn1"/></svg></div><div class="ic ic19"><svg><use href="#sn2"/></svg></div><div class="ic ic19"><svg><use href="#sn3"/></svg></div><div class="ic ic19"><svg><use href="#sn4"/></svg></div><div class="ic ic19"><svg><use href="#sn2"/></svg></div><div class="ic ic19"><svg><use href="#sn3"/></svg></div><i class="tri tri-dim"></i>
<div class="box-d bx-live"><span>No Live Surface</span></div><div class="sp10"></div><div class="sep"></div><i class="tri tri-dim"></i><div class="box-d bx-sym"><span>Symmetry: Off</span></div><div class="sp10"></div><div class="sep"></div><div class="sp8"></div>
<div class="ic ic19"><svg><use href="#rbox"/></svg></div><div class="ic ic19"><svg><use href="#rbox2"/></svg></div><div class="ic ic19 on"><svg><use href="#lst"/></svg></div><div class="sp8"></div><div class="sep"></div><div class="sp10"></div>
<div class="ic ic19"><svg><use href="#clap"/></svg></div><div class="ic ic19"><svg><use href="#clap"/></svg></div><div class="ic ic19"><svg><use href="#clap2"/></svg></div><div class="ic ic19"><svg><use href="#clap3"/></svg></div><div class="ic ic19"><svg><use href="#ring"/></svg></div><div class="ic ic19"><svg><use href="#clap3"/></svg></div><div class="ic ic19"><svg><use href="#bolt"/></svg></div><div class="ic ic19"><svg><use href="#paus"/></svg></div><div class="ic ic19"><svg><use href="#rtri"/></svg></div><div class="sp10"></div><div class="sep"></div>
<div class="box-d bx-sign position-relative"><svg class="position-absolute top-0 start-0" width="16" height="16"><use href="#pers"/></svg><span>Sign In</span><i class="tri"></i></div>
</div>
</div>
<div class="top-right d-flex flex-column text-nowrap">
<div class="ws-row d-flex"><span class="ws-lab">Workspace :</span><div class="ws-sel"><span>XGen - Interactive Groom*</span><i class="tri"></i></div></div>
<div class="ws-ic d-flex"><div class="ic ic19"><svg><use href="#bx3"/></svg></div><div class="ic ic19"><svg><use href="#man"/></svg></div><div class="ic ic19 on"><svg><use href="#chn"/></svg></div><div class="ic ic19"><svg><use href="#chn"/></svg></div><div class="ic ic19 on"><svg><use href="#lyr"/></svg></div></div>
</div>
</div>
<div class="main d-flex">
<div class="toolbox d-flex flex-column">
<div class="tool on"><svg><use href="#cur"/></svg></div><div class="tool"><svg><use href="#lasso"/></svg></div><div class="tool"><svg><use href="#paint"/></svg></div><div class="tool"><svg><use href="#mov"/></svg></div><div class="tool"><svg><use href="#rot"/></svg></div><div class="tool"><svg><use href="#sca"/></svg></div><div class="tool-gap"></div><div class="tool"><svg><use href="#last"/></svg></div><div class="tool-sep"></div><div class="tool"><svg><use href="#lay1"/></svg></div><div class="tool"><svg><use href="#lay4"/></svg></div><div class="tool"><svg><use href="#lay2"/></svg></div><div class="tool"><svg><use href="#lay0"/></svg></div>
</div>
<div class="center d-flex flex-column">
<div class="shelf">
<div class="shelf-grip"></div>
<div class="shelf-side"><svg width="14" height="6"><rect y="2" width="12" height="2" fill="#999"/></svg><svg width="10" height="10"><circle cx="5" cy="5" r="3" fill="none" stroke="#bbb" stroke-width="1.400"/></svg></div>
<div class="shelf-body">
<div class="shelf-tabs"><span>Curves / Surfaces</span><span>Poly Modeling</span><span>Sculpting</span><span>Rigging</span><span>Animation</span><span>Rendering</span><span>FX</span><span>FX Caching</span><span>Custom</span><span>Arnold</span><span>Bifrost</span><span>MASH</span><span>Motion Graphics</span><span>Polygons_User</span><span>XGen_User</span><span class="tab-act">XGen</span><span>3Delight</span></div>
<div class="shelf-icons">
<div class="sic"><svg><use href="#gx"/></svg></div><div class="sic"><svg><use href="#gd"/></svg></div><div class="sic"><svg><use href="#gb"/></svg></div><div class="sic"><svg><use href="#g2"/></svg></div><div class="sic"><svg><use href="#dia"/></svg></div><div class="sic"><svg><use href="#g3"/></svg></div><div class="sic"><svg><use href="#g4"/></svg></div><div class="sic"><svg><use href="#g5"/></svg></div><div class="sic"><svg><use href="#g6"/></svg></div><div class="sic"><svg><use href="#g7"/></svg></div><div class="sic"><svg><use href="#g8"/></svg></div><div class="sic"><svg><use href="#g9"/></svg></div><div class="sic"><svg><use href="#g10"/></svg></div><div class="sic"><svg><use href="#g11"/></svg></div><div class="sic"><svg><use href="#g12"/></svg></div><div class="shelf-div"></div>
<div class="sic"><svg><use href="#gm"/></svg></div><div class="sic"><svg><use href="#gj"/></svg></div><div class="sic"><svg><use href="#g1"/></svg></div><div class="sic"><svg><use href="#g2"/></svg></div><div class="sic"><svg><use href="#g1"/></svg></div><div class="sic"><svg><use href="#g1"/></svg></div><div class="sic"><svg><use href="#gy"/></svg></div><div class="sic"><svg><use href="#gh"/></svg></div><div class="sic"><svg><use href="#gh"/></svg></div><div class="sic"><svg><use href="#gy"/></svg></div><div class="sic"><svg><use href="#g1"/></svg></div><div class="sic"><svg><use href="#g1"/></svg></div><div class="sic"><svg><use href="#g1"/></svg></div><div class="sic"><svg><use href="#g1"/></svg></div><div class="sic"><svg><use href="#gs"/></svg></div><div class="sic"><svg><use href="#g9"/></svg></div>
</div>
<div class="shelf-scroll"><svg width="8" height="6"><path d="M0 6l4-5 4 5z" fill="#ccc"/></svg><svg width="8" height="9"><rect width="8" height="9" rx="3" fill="#777"/></svg><svg width="8" height="6"><path d="M0 0l4 5 4-5z" fill="#ccc"/></svg></div>
</div>
</div>
<div class="views">
<div class="vp vp-l">
<div class="vp-menu"><span>View</span><span>Shading</span><span>Lighting</span><span>Show</span><span>Renderer</span><span>Panels</span></div>
<div class="vp-bar">
<div class="ic ic15"><svg><use href="#cam"/></svg></div><div class="ic ic15"><svg><use href="#cam2"/></svg></div><div class="ic ic15"><svg><use href="#cam3"/></svg></div><div class="ic ic15"><svg><use href="#bkm"/></svg></div><div class="ic ic15"><svg><use href="#imgp"/></svg></div><div class="ic ic15"><svg><use href="#gmag"/></svg></div><div class="ic ic15"><svg><use href="#pen"/></svg></div><div class="sp6"></div><div class="sep"></div><div class="sp3"></div>
<div class="ic ic15 on"><svg><use href="#grid"/></svg></div><div class="ic ic15"><svg><use href="#film"/></svg></div><div class="ic ic15"><svg><use href="#fil2"/></svg></div><div class="ic ic15"></div><div class="ic ic15"><svg><use href="#fil3"/></svg></div><div class="ic ic15"><svg><use href="#fil4"/></svg></div><div class="ic ic15"><svg><use href="#fil5"/></svg></div><div class="sp6"></div><div class="sep"></div><div class="sp6"></div>
<div class="ic ic15"><svg><use href="#cwi"/></svg></div><div class="ic ic15 on"><svg><use href="#csh"/></svg></div><div class="ic ic15"><svg><use href="#half"/></svg></div><div class="ic ic15"><svg><use href="#cylt"/></svg></div><div class="ic ic15"><svg><use href="#dots"/></svg></div><div class="ic ic15"><svg><use href="#bulb"/></svg></div><div class="ic ic15"><svg><use href="#gel"/></svg></div><div class="sp3"></div><div class="sep"></div><div class="sp6"></div>
<div class="ic ic15"><svg><use href="#sph"/></svg></div><div class="ic ic15"><svg><use href="#sp2"/></svg></div><div class="ic ic15"><svg><use href="#hex"/></svg></div><div class="ic ic15"></div><div class="sep"></div><div class="sp6"></div><div class="ic ic15"><svg><use href="#cursm"/></svg></div><div class="sp3"></div><div class="sep"></div><div class="sp6"></div>
<div class="ic ic15"><svg><use href="#dup1"/></svg></div><div class="ic ic15"><svg><use href="#dup2"/></svg></div><div class="ic ic15"><svg><use href="#xr"/></svg></div><div class="sp6"></div><div class="sep"></div><div class="sp6"></div>
<div class="ic ic15"><svg><use href="#ap"/></svg></div><div class="num">0.00</div><div class="ic ic15"><svg><use href="#half2"/></svg></div><div class="num">1.00</div><div class="sp3"></div><div class="ic ic15 on"><svg><use href="#cm"/></svg></div><div class="gamma">sRGB gamma</div>
</div>
<div class="canvas">
<svg class="head" viewBox="0 0 1568 1568" preserveAspectRatio="none">
<defs>
<filter id="b6" x="-30%" y="-30%" width="160%" height="160%"><feGaussianBlur stdDeviation="6"/></filter>
<filter id="b14" x="-30%" y="-30%" width="160%" height="160%"><feGaussianBlur stdDeviation="14"/></filter>
<filter id="b30" x="-40%" y="-40%" width="180%" height="180%"><feGaussianBlur stdDeviation="30"/></filter>
<filter id="b3" x="-30%" y="-30%" width="160%" height="160%"><feGaussianBlur stdDeviation="2.500"/></filter>
<linearGradient id="bust" x1="0" y1="0" x2="0" y2="1"><stop offset="0" stop-color="#cacaca"/><stop offset=".3" stop-color="#d4d4d4"/><stop offset=".6" stop-color="#d8d8d8"/><stop offset="1" stop-color="#e2e2e2"/></linearGradient>
<radialGradient id="skull" cx=".5" cy=".28" r=".72"><stop offset="0" stop-color="#e2e2e2"/><stop offset=".7" stop-color="#dddddd"/><stop offset="1" stop-color="#d2d2d2"/></radialGradient>
<clipPath id="hclip"><path d="M760 45C1000 45 1150 200 1152 360C1153 410 1140 480 1135 560C1130 640 1110 720 1085 770C1050 860 960 950 860 965C810 972 720 972 670 965C570 950 480 860 445 770C420 720 400 640 390 560C385 480 372 410 372 360C372 200 520 45 760 45Z"/></clipPath>
<clipPath id="bclip"><path d="M520 850V1000C515 1040 500 1060 470 1080C420 1125 300 1175 180 1205C110 1225 85 1250 75 1290C62 1340 55 1370 68 1400C300 1420 600 1437 760 1437C950 1437 1250 1425 1458 1400C1468 1370 1462 1320 1450 1280C1440 1250 1420 1230 1350 1210C1250 1180 1110 1130 1050 1080C1025 1060 1010 1040 1008 1000V850Z"/></clipPath>
</defs>
<path d="M520 850V1000C515 1040 500 1060 470 1080C420 1125 300 1175 180 1205C110 1225 85 1250 75 1290C62 1340 55 1370 68 1400C300 1420 600 1437 760 1437C950 1437 1250 1425 1458 1400C1468 1370 1462 1320 1450 1280C1440 1250 1420 1230 1350 1210C1250 1180 1110 1130 1050 1080C1025 1060 1010 1040 1008 1000V850Z" fill="url(#bust)"/>
<g clip-path="url(#bclip)">
<path d="M500 930h530v70l-60 40H560l-60-40z" fill="#bababa" opacity=".35" filter="url(#b30)"/>
<path d="M590 1000v220M690 990v300M830 990v300M930 1000v220" stroke="#c6c6c6" stroke-width="26" opacity=".3" filter="url(#b14)"/>
<path d="M250 1240c180 40 400 50 500 50s350-10 520-60" stroke="#bcbcbc" stroke-width="22" fill="none" opacity=".3" filter="url(#b14)"/>
<path d="M100 1340h1340v70H100z" fill="#e8e8e8" opacity=".6" filter="url(#b14)"/>
<path d="M480 1100h110v60H480zM600 1130h60v120h-60zM930 1130h50v110h-50zM1040 1120h90v70h-90zM350 1190h130v40H350zM1150 1190h100v40h-100zM280 1250h120v30H280zM380 1300h260v30H380zM880 1310h220v30H880zM640 1320h60v100h-60z" fill="#c6c6c6" opacity=".35" filter="url(#b3)"/>
</g>
<path d="M385 490C360 480 330 470 305 480C295 490 297 510 305 530C320 590 340 640 350 670C365 700 400 718 428 715L395 540Z" fill="#dedede"/>
<path d="M335 510c20 20 40 60 45 110l35 60c-30 10-50-10-60-40z" fill="#bcbcbc" opacity=".65" filter="url(#b3)"/>
<path d="M1138 490C1160 480 1200 465 1222 475C1232 490 1228 510 1220 530C1205 590 1185 640 1170 670C1155 700 1125 718 1098 715L1130 540Z" fill="#dedede"/>
<path d="M1190 510c-20 20-45 60-50 110l-30 60c30 10 50-10 60-40z" fill="#bcbcbc" opacity=".65" filter="url(#b3)"/>
<path d="M760 45C1000 45 1150 200 1152 360C1153 410 1140 480 1135 560C1130 640 1110 720 1085 770C1050 860 960 950 860 965C810 972 720 972 670 965C570 950 480 860 445 770C420 720 400 640 390 560C385 480 372 410 372 360C372 200 520 45 760 45Z" fill="url(#skull)"/>
<g clip-path="url(#hclip)">
<path d="M600 385h330v30l-110 15H700l-100-15z" fill="#c6c6c6" opacity=".35" filter="url(#b14)"/>
<path d="M695 410l30 0-10 210-45 30zM820 410l-30 0 10 210 45 30z" fill="#bcbcbc" opacity=".5" filter="url(#b14)"/>
<path d="M380 560c40 130 60 220 160 330l-100-30-80-200zM1140 560c-40 130-70 220-160 330l100-30 80-200z" fill="#bdbdbd" opacity=".6" filter="url(#b30)"/>
<path d="M540 850c60 60 130 110 220 115 90-5 170-60 220-115l-30 120H570z" fill="#cacaca" opacity=".5" filter="url(#b14)"/>
<path d="M420 470c80-60 200-60 280-10l-40 90c-60 30-180 30-240-10zM830 470c80-50 190-50 290 0l-40 80c-80 40-200 30-240-10z" fill="#e8e8e8" opacity=".5" filter="url(#b14)"/>
</g>
<path d="M500 470C540 435 620 445 655 495C620 535 530 520 500 470Z" fill="#c4c4c4" opacity=".55" filter="url(#b6)"/>
<path d="M1030 465C990 435 910 445 870 490C910 530 990 515 1030 465Z" fill="#c4c4c4" opacity=".55" filter="url(#b6)"/>
<path d="M510 465C540 445 600 445 645 490C610 510 540 500 510 465Z" fill="#dedede" stroke="#a8a8a8" stroke-width="1.500"/>
<path d="M1018 462C985 445 920 450 875 488C915 510 985 498 1018 462Z" fill="#dedede" stroke="#a8a8a8" stroke-width="1.500"/>
<path d="M495 480C540 530 620 535 662 500M1035 475C990 525 910 530 862 498" fill="none" stroke="#bfbfbf" stroke-width="4" filter="url(#b3)"/>
<path d="M700 640c10-40 40-60 60-60s50 20 60 60l30 30c0 15-20 15-50 5-20 10-60 10-80 0-30 10-50 10-50-5z" fill="#d8d8d8" filter="url(#b6)"/>
<path d="M680 650C690 628 720 625 735 648C750 668 780 660 800 640C820 625 850 640 850 675C830 690 800 665 770 682C750 688 720 660 695 680C680 682 675 665 680 650Z" fill="#b2b2b2" filter="url(#b3)"/>
<path d="M640 785C680 750 730 715 765 733C800 715 850 750 890 790C830 762 700 762 640 785Z" fill="#d0d0d0" filter="url(#b3)"/>
<path d="M650 790C700 765 830 765 880 792C840 830 690 832 650 790Z" fill="#e2e2e2" stroke="#c8c8c8" stroke-width="1.500"/>
<path d="M700 828h110" stroke="#b4b4b4" stroke-width="5" filter="url(#b3)"/>
<path d="M630 790c-10 30 20 60 40 70h190c30-10 50-40 40-70" fill="none" stroke="#c6c6c6" stroke-width="9" opacity=".5" filter="url(#b6)"/>
<path d="M560 885C600 925 660 965 760 970C850 965 930 930 1000 870" fill="none" stroke="#adadad" stroke-width="3" filter="url(#b3)"/>
</svg>
<div class="vp-cap">camera1 -Z</div>
<svg class="gizmo" viewBox="0 0 26 26"><path d="M12 20V4" stroke="#4fc76c" stroke-width="1.500"/><path d="M12 20h12" stroke="#d94b4b" stroke-width="1.500"/><path d="M12 20l-4 3" stroke="#5a79d8" stroke-width="1.500"/></svg>
</div>
</div>
<div class="vp vp-r">
<div class="vp-menu"><span>View</span><span>Shading</span><span>Lighting</span><span>Show</span><span>Renderer</span><span>Panels</span></div>
<div class="vp-bar">
<div class="ic ic15"><svg><use href="#cam"/></svg></div><div class="ic ic15"><svg><use href="#cam2"/></svg></div><div class="ic ic15"><svg><use href="#cam3"/></svg></div><div class="ic ic15"><svg><use href="#bkm"/></svg></div><div class="ic ic15"><svg><use href="#imgp"/></svg></div><div class="ic ic15"><svg><use href="#gmag"/></svg></div><div class="ic ic15"><svg><use href="#pen"/></svg></div><div class="sp6"></div><div class="sep"></div><div class="sp3"></div>
<div class="ic ic15"><svg><use href="#grid"/></svg></div><div class="ic ic15"><svg><use href="#film"/></svg></div><div class="ic ic15"><svg><use href="#fil2"/></svg></div><div class="ic ic15"></div><div class="ic ic15"><svg><use href="#fil3"/></svg></div><div class="ic ic15"><svg><use href="#fil4"/></svg></div><div class="ic ic15"><svg><use href="#fil5"/></svg></div><div class="sp6"></div><div class="sep"></div><div class="sp6"></div>
<div class="ic ic15"><svg><use href="#cwi"/></svg></div><div class="ic ic15 on"><svg><use href="#csh"/></svg></div><div class="ic ic15"><svg><use href="#half"/></svg></div><div class="ic ic15"><svg><use href="#cylt"/></svg></div><div class="ic ic15"><svg><use href="#dots"/></svg></div><div class="ic ic15"><svg><use href="#bulb"/></svg></div><div class="ic ic15"><svg><use href="#gel"/></svg></div><div class="sp3"></div><div class="sep"></div><div class="sp6"></div>
<div class="ic ic15"><svg><use href="#sph"/></svg></div><div class="ic ic15"><svg><use href="#sp2"/></svg></div><div class="ic ic15"><svg><use href="#hex"/></svg></div><div class="ic ic15"></div><div class="sep"></div><div class="sp6"></div><div class="ic ic15"><svg><use href="#cursm"/></svg></div><div class="sp3"></div><div class="sep"></div><div class="sp6"></div>
<div class="ic ic15"><svg><use href="#dup1"/></svg></div><div class="ic ic15"><svg><use href="#dup2"/></svg></div><div class="ic ic15"><svg><use href="#xr"/></svg></div><div class="sp6"></div><div class="sep"></div><div class="sp6"></div>
<div class="ic ic15"><svg><use href="#ap"/></svg></div><div class="num">0.00</div><div class="ic ic15"><svg><use href="#half2"/></svg></div><div class="num">1.00</div><div class="sp3"></div><div class="ic ic15 on"><svg><use href="#cm"/></svg></div><div class="gamma">sRGB gamma</div>
</div>
<div class="canvas">
<svg class="head2" viewBox="0 0 62 78">
<defs><filter id="s1b"><feGaussianBlur stdDeviation=".7"/></filter></defs>
<g filter="url(#s1b)"><path d="M8 50C4 40 3 32 4 24C4 10 12 1 24 1C36 1 44 10 42 24C41 34 37 41 34 46C34 52 36 56 40 60C46 64 54 66 59 76C40 80 15 78 0 70C4 64 14 64 16 60C18 57 16 54 14 52C12 52 10 52 8 50Z" fill="#cecece"/><path d="M6 24l9 2M6 31l8-1M5 38l9-2M8 46l8-3M34 10c-4 8-6 16-5 28" stroke="#9f9f9f" stroke-width="1.200" fill="none"/><path d="M22 50c2 8 4 12 8 18M38 60l8 14" stroke="#a6a6a6" fill="none"/><path d="M52 68l7 8-12 1z" fill="#7d7d7d"/></g>
</svg>
<div class="tiny-tri"></div>
<div class="vp-cap">persp</div>
<svg class="gizmo" viewBox="0 0 26 26"><path d="M12 20V4" stroke="#4fc76c" stroke-width="1.500"/><path d="M12 20h12" stroke="#d94b4b" stroke-width="1.500"/><path d="M12 20l-4 3" stroke="#5a79d8" stroke-width="1.500"/></svg>
</div>
</div>
</div>
<div class="tl">
<div class="tl-track"><div class="tl-cur">1</div>
<div class="tick"><i></i><b>5</b></div><div class="tick"><i></i><b>10</b></div><div class="tick"><i></i><b>15</b></div><div class="tick"><i></i><b>20</b></div><div class="tick"><i></i><b>25</b></div><div class="tick"><i></i><b>30</b></div><div class="tick"><i></i><b>35</b></div><div class="tick"><i></i><b>40</b></div><div class="tick"><i></i><b>45</b></div><div class="tick"><i></i><b>50</b></div><div class="tick"><i></i><b>55</b></div><div class="tick"><i></i><b>60</b></div><div class="tick"><i></i><b>65</b></div><div class="tick"><i></i><b>70</b></div><div class="tick"><i></i><b>75</b></div><div class="tick"><i></i><b>80</b></div><div class="tick"><i></i><b>85</b></div><div class="tick"><i></i><b>90</b></div><div class="tick"><i></i><b>95</b></div><div class="tick"><i></i><b>100</b></div><div class="tick"><i></i><b>105</b></div><div class="tick"><i></i><b>110</b></div><div class="tick"><i></i><b>115</b></div><div class="tick"><i></i><b>120</b></div>
</div>
<div class="tl-input">1</div>
<div class="pb">
<svg viewBox="0 0 16 12"><path d="M3 2h1.500v8H3zM9 2v8L5 6zM14 2v8l-4-4z" fill="#ccc"/></svg><svg viewBox="0 0 16 12"><path d="M4 2h2v8H4zM12 1v10L6 6z" fill="#ccc"/></svg><svg viewBox="0 0 16 12"><path d="M4 1h1.500v10H4z" fill="#d88a3a"/><path d="M13 1v10L7 6z" fill="#ccc"/></svg><svg viewBox="0 0 16 12"><path d="M12 0v12L3 6z" fill="#ccc"/></svg><svg viewBox="0 0 16 12"><path d="M4 0v12l9-6z" fill="#ddd"/></svg><svg viewBox="0 0 16 12"><path d="M11 1h1.500v10H11z" fill="#d88a3a"/><path d="M3 1v10l6-5z" fill="#ccc"/></svg><svg viewBox="0 0 16 12"><path d="M10 2h2v8h-2zM4 1v10l6-5z" fill="#ccc"/></svg><svg viewBox="0 0 16 12"><path d="M12 2h1.500v8H12zM2 2v8l4-4zM7 2v8l4-4z" fill="#ccc"/></svg>
</div>
</div>
<div class="rg">
<div class="rg-in">1</div><div class="rg-in rg-gap">1</div>
<div class="rg-sl"><i class="rg-h"></i><div class="rg-mid"><span>1</span><span>120</span></div><i class="rg-h"></i></div>
<div class="rg-right">
<div class="rg-in">120</div><div class="rg-in rg-gap">200</div>
<div class="key brk"><svg viewBox="0 0 13 17"><path d="M1 1h8v15L5 13l-4 3z" fill="#c47a35"/><path d="M10 1v5M8 3h5" stroke="#eee" stroke-width="1.400"/></svg></div>
<i class="tri tri-dim ms-4 mt-2"></i><div class="rg-t t-chr">No Character Set</div><i class="tri tri-dim mt-2"></i><div class="rg-t t-lay">No Anim Layer</div>
<div class="rg-t t-fps"><span>24 fps</span><i class="tri"></i></div>
<div class="rg-ic ms-2"><svg viewBox="0 0 16 16"><path d="M2 8a4 4 0 0 1 4-4h7M14 8a4 4 0 0 1-4 4H3" fill="none" stroke="#ddd" stroke-width="1.800"/><path d="M11 1l3 3-3 3zM5 9l-3 3 3 3z" fill="#ddd"/></svg></div>
<div class="rg-ic on ms-1"><svg viewBox="0 0 16 16"><rect x="2" y="5" width="10" height="8" fill="#c9844a"/><path d="M5 2v3M9 2v3" stroke="#ddd"/><path d="M12 2h3v3" stroke="#eee" fill="none"/></svg></div>
<div class="sep ms-2"></div>
<div class="key brk ms-2"><svg viewBox="0 0 13 17"><path d="M1 6h3l4-4v13l-4-4H1z" fill="#ddd"/></svg></div>
<div class="rg-ic ms-1"><svg viewBox="0 0 16 16"><circle cx="8" cy="8" r="6" fill="none" stroke="#ccc" stroke-width="1.300" stroke-dasharray="7 2"/><path d="M8 4v4l3 2" stroke="#ccc" fill="none"/></svg></div>
<div class="rg-ic ms-1"><svg viewBox="0 0 16 16"><circle cx="9" cy="3" r="2" fill="#e7a05c"/><path d="M9 5L7 10l4 2-2 3M7 10l-4 3M4 6h8" stroke="#e7a05c" stroke-width="1.600" fill="none"/></svg></div>
</div>
<div class="wave"></div><div class="wave-bg"></div>
</div>
</div>
<div class="right d-flex flex-column text-nowrap">
<div class="rtabs"><span class="rtab-a">Channel Box / Layer Editor</span><span>XGen Interactive Groom Editor</span><span class="rt-g">XGen</span></div>
<div class="r-ic"><svg><use href="#att"/></svg><svg><use href="#arc"/></svg><svg width="12"><use href="#pen"/></svg></div>
<div class="rmenu rmenu-cb"><span>Channels</span><span>Edit</span><span>Object</span><span>Show</span></div>
<div class="cb">
<div class="cb-h">camera1</div>
<div class="cb-r"><div class="cb-l">Translate X</div><div class="cb-v">0.072</div></div>
<div class="cb-r"><div class="cb-l">Translate Y</div><div class="cb-v">163.94</div></div>
<div class="cb-r"><div class="cb-l">Translate Z</div><div class="cb-v">75.153</div></div>
<div class="cb-r"><div class="cb-l">Rotate X</div><div class="cb-v">0</div></div>
<div class="cb-r"><div class="cb-l">Rotate Y</div><div class="cb-v">0</div></div>
<div class="cb-r"><div class="cb-l">Rotate Z</div><div class="cb-v">0</div></div>
<div class="cb-r"><div class="cb-l">Scale X</div><div class="cb-v">1</div></div>
<div class="cb-r"><div class="cb-l">Scale Y</div><div class="cb-v">1</div></div>
<div class="cb-r"><div class="cb-l">Scale Z</div><div class="cb-v">1</div></div>
<div class="cb-r"><div class="cb-l">Visibility</div><div class="cb-v ro">on</div></div>
<div class="cb-h cb-h2">SHAPES</div>
<div class="cb-s">cameraShape1</div>
<div class="cb-r"><div class="cb-l">Horizontal Film Aperture</div><div class="cb-v">1.417</div></div>
<div class="cb-r"><div class="cb-l">Vertical Film Aperture</div><div class="cb-v">0.945</div></div>
<div class="cb-r"><div class="cb-l">Focal Length</div><div class="cb-v">50</div></div>
<div class="cb-r"><div class="cb-l">Lens Squeeze Ratio</div><div class="cb-v">1</div></div>
<div class="cb-r"><div class="cb-l">F Stop</div><div class="cb-v">5.6</div></div>
<div class="cb-r"><div class="cb-l">Focus Distance</div><div class="cb-v">5</div></div>
<div class="cb-r"><div class="cb-l">Shutter Angle</div><div class="cb-v">144</div></div>
<div class="cb-r"><div class="cb-l">Center Of Interest</div><div class="cb-v">31.123</div></div>
<div class="cb-r"><div class="cb-l">Locator Scale</div><div class="cb-v"><i class="lcs"></i>1</div></div>
<div class="cb-r"><div class="cb-l">Projection Type</div><div class="cb-v ro">Default</div></div>
<div class="cb-r"><div class="cb-l">Auto Render Clip Plane</div><div class="cb-v">100</div></div>
<div class="cb-sb"></div>
</div>
<div class="disp"></div>
<div class="tabs2"><span class="t2a">Display</span><span class="ms-2">Anim</span></div>
<div class="rmenu rmenu-l"><span>Layers</span><span>Options</span><span>Help</span></div>
<div class="l-ic"><svg><use href="#lay-i"/></svg><svg><use href="#lay-i"/></svg><svg><use href="#lay-j"/></svg><svg><use href="#lay-j"/></svg></div>
<div class="lbox"></div>
<div class="ae-tab"><span>Attribute Editor</span></div>
<div class="rmenu rmenu-a"><span>List</span><span>Selected</span><span>Focus</span><span>Attributes</span><span class="dsp brk">Display</span><span>Show</span><span>Help</span></div>
<div class="aet"><span class="aet-0">camera1</span><span class="aet-a">cameraShape1</span><span class="aet-g">cam01_01</span><span class="aet-g">camera01_02</span><span>camera01_03</span><div class="aet-arr"><i class="tl-l"></i><i class="tl-rr"></i></div></div>
<div class="cam-b"><div class="cam-lab">camera:</div><div class="cam-in">cameraShape1</div><div class="cam-ics"><svg><use href="#rbox"/></svg><svg><use href="#rbox2"/></svg></div><div class="cam-btn"><div class="mbtn">Focus</div><div class="mbtn">Presets</div><div class="mbtn-row"><div class="mbtn">Show</div><div class="mbtn">Hide</div></div></div></div>
<div class="sam"><div class="sam-l">Sample</div><div class="sam-sw"><svg width="46" height="46" viewBox="0 0 46 46"><circle cx="24" cy="14" r="9" fill="none" stroke="#bdbdbd" stroke-width="7" stroke-dasharray="5 1"/><circle cx="15" cy="29" r="9" fill="none" stroke="#ccc" stroke-width="7" stroke-dasharray="5 1"/><path d="M30 26l12-6M26 34l8-6" stroke="#eee" stroke-width="2"/><path d="M6 14l6 3M31 30h6v6h-6z" fill="#ddd" stroke="#ddd"/></svg></div></div>
<div class="frm flex-column d-flex">
<div class="fr-c"><i class="chk"></i>Shake Enabled</div>
<div class="fr fr-d"><div class="fr-l">Shake</div><div class="fr-i dis">0.000</div><div class="fr-i dis">0.000</div><svg class="ck2" viewBox="0 0 10 10" opacity=".3"><use href="#ckr"/></svg></div>
<div class="fr-c"><i class="chk"></i>Shake Overscan Enabled</div>
<div class="fr fr-d"><div class="fr-l">Shake Overscan</div><div class="fr-i dis">1.000</div><svg class="ck1" viewBox="0 0 10 10" opacity=".3"><use href="#ckr"/></svg></div>
<div class="fr"><div class="fr-l">Pre Scale</div><div class="fr-i">1.000</div><svg class="ck1" viewBox="0 0 10 10"><use href="#ckr"/></svg></div>
<div class="fr"><div class="fr-l">Film Translate</div><div class="fr-i">0.000</div><div class="fr-i">0.000</div><svg class="ck2" viewBox="0 0 10 10"><use href="#ckr"/></svg></div>
<div class="fr"><div class="fr-l">Film Roll Pivot</div><div class="fr-i">0.000</div><div class="fr-i">0.000</div><svg class="ck2" viewBox="0 0 10 10"><use href="#ckr"/></svg></div>
<div class="fr"><div class="fr-l">Film Roll Value</div><div class="fr-i">0.000</div><svg class="ck1" viewBox="0 0 10 10"><use href="#ckr"/></svg></div>
<div class="fr"><div class="fr-l">Film Roll Order</div><div class="fr-sel"><span>Rotate-Translate</span><i class="tri"></i></div></div>
<div class="fr"><div class="fr-l">Post Scale</div><div class="fr-i">1.000</div><svg class="ck1" viewBox="0 0 10 10"><use href="#ckr"/></svg></div>
<div class="sects">
<div class="sect"><i></i>Depth of Field</div><div class="sect"><i></i>Output Settings</div><div class="sect"><i></i>Environment</div><div class="sect"><i></i>Special Effects</div><div class="sect"><i></i>Display Options</div><div class="sect"><i></i>Movement Options</div><div class="sect"><i></i>Orthographic Views</div><div class="sect"><i></i>Object Display</div>
</div>
<div class="ae-arr"></div><div class="ae-sb"></div>
</div>
<div class="notes">Notes: cameraShape1</div>
<div class="notes-b"></div>
</div>
</div>
<svg class="mouse" viewBox="0 0 12 18"><path d="M1 1l10 10-4.500.5 2.500 5-2 1-2.500-5L1 15z" fill="#eee" stroke="#222" stroke-width=".6"/></svg>
<svg class="wmk" viewBox="0 0 1920 1080">
<g><text class="wm-r" transform="translate(147 165) rotate(-24)">RRCG</text><text class="wm-r" transform="translate(394 497) rotate(-24)">RRCG</text><text class="wm-r" transform="translate(722 361) rotate(-24)">RRCG</text><text class="wm-r" transform="translate(1078 202) rotate(-24)">RRCG</text><text class="wm-r" transform="translate(1420 86) rotate(-24)">RRCG</text><text class="wm-r" transform="translate(1667 383) rotate(-24)">RRCG</text><text class="wm-r" transform="translate(949 686) rotate(-24)">RRCG</text><text class="wm-r" transform="translate(1286 560) rotate(-24)">RRCG</text><text class="wm-r" transform="translate(1873 727) rotate(-24)">RRCG</text><text class="wm-r" transform="translate(1470 912) rotate(-24)">RRCG</text><text class="wm-r" transform="translate(279 972) rotate(-24)">RRCG</text><text class="wm-r" transform="translate(620 832) rotate(-24)">RRCG</text><text class="wm-r" transform="translate(56 629) rotate(-24)">RRCG</text><text class="wm-r" transform="translate(1213 1048) rotate(-24)">RRCG</text><text class="wm-r" transform="translate(470 20) rotate(-24)">RRCG</text></g>
<g><text class="wm-c" transform="translate(300 316) rotate(-24)" dy="22">人人素材</text><text class="wm-c" transform="translate(527 654) rotate(-24)" dy="22">人人素材</text><text class="wm-c" transform="translate(661 160) rotate(-24)" dy="22">人人素材</text><text class="wm-c" transform="translate(958 465) rotate(-24)" dy="22">人人素材</text><text class="wm-c" transform="translate(1365 294) rotate(-24)" dy="22">人人素材</text><text class="wm-c" transform="translate(1800 117) rotate(-24)" dy="22">人人素材</text><text class="wm-c" transform="translate(1200 833) rotate(-24)" dy="22">人人素材</text><text class="wm-c" transform="translate(1660 643) rotate(-24)" dy="22">人人素材</text><text class="wm-c" transform="translate(1680 1047) rotate(-24)" dy="22">人人素材</text><text class="wm-c" transform="translate(110 815) rotate(-24)" dy="22">人人素材</text><text class="wm-c" transform="translate(800 1100) rotate(-24)" dy="22">人人素材</text></g>
</svg>
<svg class="brandmark" viewBox="0 0 203 80">
<path d="M5 37A33 33 0 0 1 71 37" fill="none" stroke="#a9a9a9" stroke-width="5"/>
<path d="M2 44c2 20 18 33 36 33s34-13 36-33M2 44h7M74 44h-7" fill="none" stroke="#2a9de0" stroke-width="5.500"/>
<path d="M17 21Q38 10 59 21V52L48 60 38 68 28 60 17 52Z" fill="#2a9de0"/>
<path d="M38 18V64M24 44h9M43 44h9M27 46v18M49 46v18" stroke="#3b3b3b" stroke-width="2.500"/>
<path d="M25 26h8v11h-8zM43 26h8v11h-8z" fill="#3b3b3b"/>
<text x="86" y="45" font-family="Liberation Sans,sans-serif" font-size="38" fill="#ababab" textLength="112" lengthAdjust="spacingAndGlyphs">RRCG</text>
<text x="86" y="69" font-family="Noto Sans CJK SC,sans-serif" font-size="27" fill="#a4a4a4" textLength="112">人人素材</text>
</svg>
</div>
</body></html>
